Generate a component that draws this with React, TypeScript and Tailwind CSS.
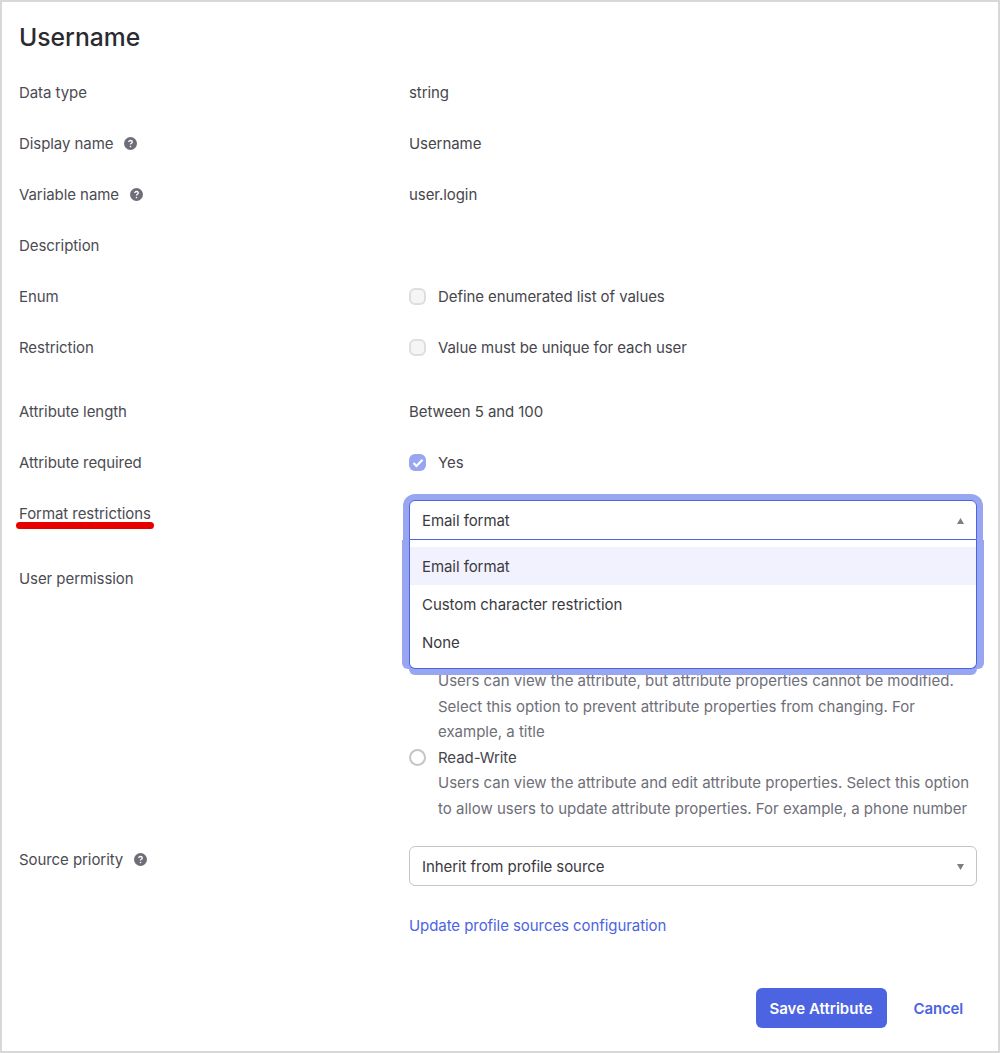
import type { ReactNode } from 'react';

function HelpIcon() {
  return (
    <svg width="13" height="13" viewBox="0 0 13 13" className="shrink-0">
      <circle cx="6.5" cy="6.5" r="6.5" fill="#6e6e78" />
      <path d="M4.7 5.1c0-1 .8-1.6 1.8-1.6s1.8.6 1.8 1.5c0 1.3-1.8 1.3-1.8 2.4" fill="none" stroke="#fff" strokeWidth="1.3" />
      <circle cx="6.5" cy="9.5" r=".8" fill="#fff" />
    </svg>
  );
}

function Row({ label, help, children }: { label: string; help?: boolean; children?: ReactNode }) {
  return (
    <div className="flex h-[51px] pt-[1px]">
      <div className="flex w-[390px] h-[25.5px] items-center gap-[11px] text-[#4b4b52]">
        {label}
        {help && <HelpIcon />}
      </div>
      <div className="flex-1 text-[#46464c]">{children}</div>
    </div>
  );
}

function Checkbox({ label, checked }: { label: string; checked?: boolean }) {
  return (
    <div className="flex items-center h-[25.5px] gap-[12px]">
      {checked ? (
        <span className="flex w-[17px] h-[17px] rounded-[6px] bg-[#98a6f1] items-center justify-center">
          <svg width="12" height="10" viewBox="0 0 12 10" fill="none">
            <path d="M1.5 5 4.5 8 10.5 1.8" stroke="#fff" strokeWidth="2.2" />
          </svg>
        </span>
      ) : (
        <span className="w-[17px] h-[17px] rounded-[6px] bg-[#f5f5f6] border-2 border-[#dedee2]" />
      )}
      {label}
    </div>
  );
}

function Arrow({ up }: { up?: boolean }) {
  return (
    <svg width="7" height="6" viewBox="0 0 7 6" className="ml-auto">
      <path d={up ? 'M3.5 0 7 6H0z' : 'M0 0h7L3.5 6z'} fill="#7d7d85" />
    </svg>
  );
}

export default function App() {
  return (
    <div className="w-[1000px] h-[1053px] border-2 border-[#d8d8d8] bg-white pl-[17px] pr-[21px] pt-[17px] text-[15px] leading-[25.5px] tracking-[-0.07px] font-['Inter',sans-serif] overflow-hidden">
      <h1 className="text-[24.7px] leading-[36px] font-medium tracking-normal text-[#2a2a2f] mb-[24px]">Username</h1>

      <Row label="Data type">string</Row>
      <Row label="Display name" help>Username</Row>
      <Row label="Variable name" help>user.login</Row>
      <Row label="Description" />
      <Row label="Enum"><Checkbox label="Define enumerated list of values" /></Row>
      <Row label="Restriction"><Checkbox label="Value must be unique for each user" /></Row>

      <div className="h-[13px]" />

      <Row label="Attribute length">Between 5 and 100</Row>
      <Row label="Attribute required"><Checkbox label="Yes" checked /></Row>

      {/* Format restrictions, dropdown open */}
      <div className="flex h-[65px]">
        <div className="relative w-[390px] h-[25.5px] pt-[1px] text-[#4b4b52]">
          Format restrictions
          <div className="absolute left-[-3px] top-[22px] w-[138px] h-[7px] rounded-full bg-[#e60000]" />
        </div>
        <div className="relative flex-1">
          <div className="flex items-center h-10 pt-[1px] pl-[12px] pr-[12px] bg-white text-[#3a3a40] border border-[#4c64e1] rounded-t-[6px] shadow-[0_0_0_6px_#98a6f1]">
            Email format
            <Arrow up />
          </div>
          <div className="absolute z-10 left-0 right-0 top-10 h-[129px] bg-white border border-t-0 border-[#4c64e1] rounded-b-[6px] pt-[7px] text-[#3a3a40] shadow-[-7px_0_0_0_#98a6f1,7px_0_0_0_#98a6f1,0_6px_0_0_#98a6f1]">
            <div className="flex items-center h-[38px] pt-[1px] pl-[12px] bg-[#f1f2fd]">Email format</div>
            <div className="flex items-center h-[38px] pt-[1px] pl-[12px]">Custom character restriction</div>
            <div className="flex items-center h-[38px] pt-[1px] pl-[12px]">None</div>
          </div>
        </div>
      </div>

      {/* User permission */}
      <div className="flex h-[281px]">
        <div className="w-[390px] pt-[0.5px] text-[#4b4b52]">User permission</div>
        <div className="flex-1 pt-[103px]">
          <div className="pl-[29px] text-[#6e6e78] tracking-normal">
            Users can view the attribute, but attribute properties cannot be modified. Select this option to prevent attribute properties from changing. For example, a title
          </div>
          <div className="flex items-center h-[25.5px] gap-[12px] text-[#46464c]">
            <span className="w-[17px] h-[17px] rounded-full bg-white border-2 border-[#c4c4c9]" />
            Read-Write
          </div>
          <div className="pl-[29px] text-[#6e6e78] tracking-normal">
            Users can view the attribute and edit attribute properties. Select this option to allow users to update attribute properties. For example, a phone number
          </div>
        </div>
      </div>

      {/* Source priority */}
      <div className="flex">
        <div className="flex w-[390px] h-[25.5px] mt-[1px] items-center gap-[11px] text-[#4b4b52]">
          Source priority
          <HelpIcon />
        </div>
        <div className="flex-1">
          <div className="flex items-center h-10 pt-[1px] pl-[12px] pr-[12px] text-[#3a3a40] border border-[#c4c4c9] rounded-[6px]">
            Inherit from profile source
            <Arrow />
          </div>
          <div className="mt-[27px] text-[#4c64e1]">Update profile sources configuration</div>
        </div>
      </div>

      <div className="flex justify-end items-center mt-[49px]">
        <button className="h-[40.5px] w-[131px] pt-[1px] rounded-[6px] bg-[#4c64e1] text-white font-semibold tracking-[0.05px]">Save Attribute</button>
        <button className="ml-[27px] mr-[14px] pt-[1px] text-[#4c64e1] font-semibold tracking-[-0.15px]">Cancel</button>
      </div>
    </div>
  );
}
